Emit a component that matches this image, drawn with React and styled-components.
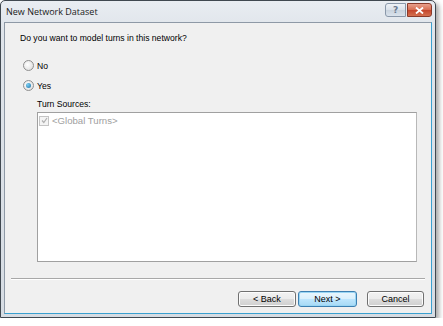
import React from "react";
import styled, { createGlobalStyle } from "styled-components";

const GlobalStyle = createGlobalStyle`
  html, body {
    margin: 0;
    padding: 0;
    background: #ffffff;
  }
  body {
    font-family: "Liberation Sans", Arial, sans-serif;
    font-size: 8.6px;
    line-height: 10px;
    color: #000;
  }
`;

const Window = styled.div`
  width: 436px;
  height: 318px;
  box-sizing: border-box;
  border: 1px solid #404850;
  border-radius: 5px 5px 0 0;
  background: linear-gradient(#e9edf2, #dfe4ea 30px, #d6dce3);
  box-shadow: 3px 3px 5px rgba(0, 0, 0, 0.35);
  display: flex;
  flex-direction: column;
  padding: 0 3px 3px 3px;
`;

const TitleBar = styled.div`
  height: 21px;
  display: flex;
  justify-content: space-between;
  padding-left: 2px;
`;

const Title = styled.span`
  font-family: "Open Sans", "Liberation Sans", sans-serif;
  font-size: 9px;
  line-height: 21px;
  color: #1a1a1a;
`;

const Caption = styled.div`
  display: flex;
  margin-top: 2px;
  gap: 1px;
`;

const CapButton = styled.div`
  width: ${({ w }) => w}px;
  height: 14px;
  box-sizing: border-box;
  border: 1px solid ${({ close }) => (close ? "#8a3a2a" : "#8a98aa")};
  border-radius: ${({ close }) => (close ? "0 3px 3px 0" : "3px 0 0 3px")};
  background: ${({ close }) =>
    close
      ? "linear-gradient(#e9a08c, #d66c50 50%, #c4452c 51%, #d4704f)"
      : "linear-gradient(#eef2f7, #d9e1ea 50%, #c9d3de 51%, #dae2ec)"};
  display: flex;
  align-items: center;
  justify-content: center;
  color: #6a7a90;
  font-family: "DejaVu Sans", sans-serif;
  font-weight: bold;
  font-size: 9px;
`;

const Client = styled.div`
  flex: 1;
  background: #f0f0f0;
  border: 1px solid #8e99a6;
  border-right-color: #3aa0d0;
  border-bottom-color: #3aa0d0;
  display: flex;
  flex-direction: column;
  padding: 10px 0 0 15px;
`;

const Question = styled.div`
  height: 10px;
  margin-bottom: 16px;
`;

const RadioRow = styled.label`
  display: flex;
  align-items: center;
  gap: 3px;
  height: 13px;
  margin-left: 3px;
  margin-bottom: 7px;
`;

const Radio = styled.span`
  width: 11px;
  height: 11px;
  box-sizing: border-box;
  border-radius: 50%;
  border: 1px solid #8f8f8f;
  background: radial-gradient(circle at 40% 40%, #ffffff, #d8d8d8);
  display: flex;
  align-items: center;
  justify-content: center;
  &::after {
    content: "";
    display: ${({ checked }) => (checked ? "block" : "none")};
    width: 5px;
    height: 5px;
    border-radius: 50%;
    background: radial-gradient(circle at 35% 35%, #7ad0f4, #1c6fa6);
  }
`;

const Indented = styled.div`
  margin-left: 17px;
  display: flex;
  flex-direction: column;
`;

const SubLabel = styled.div`
  height: 10px;
  margin-bottom: 3px;
`;

const ListBox = styled.div`
  width: 380px;
  height: 150px;
  box-sizing: border-box;
  background: #fff;
  border: 1px solid #a0a0a0;
  border-right-color: #b8b8b8;
  padding: 2px 1px;
`;

const ListItem = styled.div`
  display: flex;
  align-items: center;
  gap: 3px;
  color: #a0a0a0;
  font-size: 9.6px;
  line-height: 11px;
`;

const Check = styled.span`
  width: 10px;
  height: 10px;
  box-sizing: border-box;
  border: 1px solid #c4c4c4;
  background: #f4f4f4;
  display: flex;
  align-items: center;
  justify-content: center;
`;

const Separator = styled.div`
  margin: 16px 0 0 -9px;
  width: 414px;
  height: 1px;
  background: #a8a8a8;
  border-bottom: 1px solid #fff;
`;

const ButtonRow = styled.div`
  display: flex;
  justify-content: flex-end;
  margin: 11px 7px 0 0;
`;

const Button = styled.button`
  width: ${({ w }) => w}px;
  height: 16px;
  margin-left: ${({ gap }) => gap || 0}px;
  box-sizing: border-box;
  padding: 0;
  font-family: "Liberation Sans", Arial, sans-serif;
  font-size: 9px;
  color: #000;
  border-radius: 3px;
  border: 1px solid ${({ primary }) => (primary ? "#3c7fb1" : "#707070")};
  background: ${({ primary }) =>
    primary
      ? "linear-gradient(#eaf6fd, #d9f0fc 50%, #bee6fd 51%, #a7d9f5)"
      : "linear-gradient(#f2f2f2, #ebebeb 50%, #dddddd 51%, #cfcfcf)"};
  box-shadow: inset 0 0 0 1px ${({ primary }) => (primary ? "#9ad6f4" : "#fcfcfc")};
`;

export default function App() {
  return (
    <>
      <GlobalStyle />
      <Window>
        <TitleBar>
          <Title>New Network Dataset</Title>
          <Caption>
            <CapButton w={21}>?</CapButton>
            <CapButton w={25} close>
              <svg width="9" height="7" viewBox="0 0 9 7">
                <path d="M1 0.5 L8 6.5 M8 0.5 L1 6.5" stroke="#fff" strokeWidth="1.8" />
              </svg>
            </CapButton>
          </Caption>
        </TitleBar>
        <Client>
          <Question>Do you want to model turns in this network?</Question>
          <RadioRow>
            <Radio />
            No
          </RadioRow>
          <RadioRow>
            <Radio checked />
            Yes
          </RadioRow>
          <Indented>
            <SubLabel>Turn Sources:</SubLabel>
            <ListBox>
              <ListItem>
                <Check>
                  <svg width="7" height="7" viewBox="0 0 7 7">
                    <path d="M1 3.5 L2.8 5.5 L6 1" stroke="#b0b0b0" strokeWidth="1.2" fill="none" />
                  </svg>
                </Check>
                &lt;Global Turns&gt;
              </ListItem>
            </ListBox>
          </Indented>
          <Separator />
          <ButtonRow>
            <Button w={58}>&lt; Back</Button>
            <Button w={59} gap={2} primary>Next &gt;</Button>
            <Button w={57} gap={10}>Cancel</Button>
          </ButtonRow>
        </Client>
      </Window>
    </>
  );
}
